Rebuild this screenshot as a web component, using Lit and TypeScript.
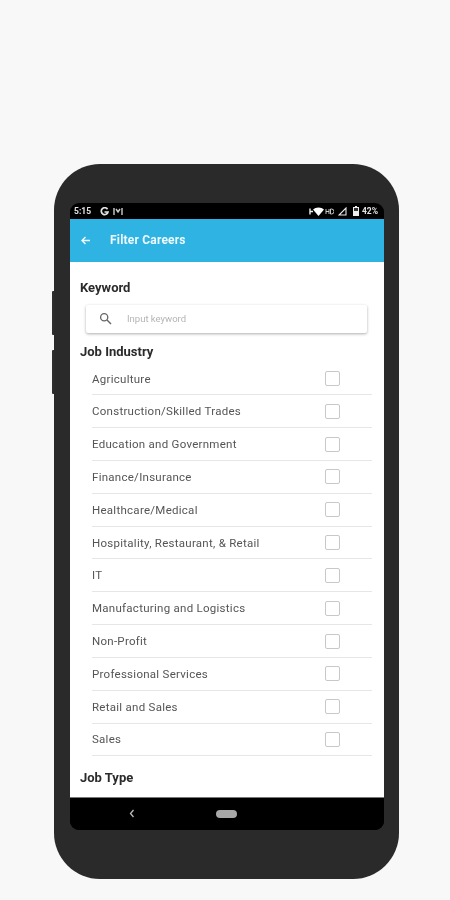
import { LitElement, html, css } from "lit";
import { customElement } from "lit/decorators.js";

const INDUSTRIES = [
  "Agriculture",
  "Construction/Skilled Trades",
  "Education and Government",
  "Finance/Insurance",
  "Healthcare/Medical",
  "Hospitality, Restaurant, & Retail",
  "IT",
  "Manufacturing and Logistics",
  "Non-Profit",
  "Professional Services",
  "Retail and Sales",
  "Sales",
];

@customElement("app-root")
export class AppRoot extends LitElement {
  static styles = css`
    :host {
      display: block;
      width: 450px;
      height: 900px;
      overflow: hidden;
      background: #f8f8f8;
      font-family: Roboto, "Liberation Sans", sans-serif;
    }
    .page {
      padding: 164px 0 0 54px;
    }
    .phone {
      position: relative;
      box-sizing: border-box;
      width: 345px;
      height: 715px;
      padding: 39px 15px 0 16px;
      background: #2a2a2a;
      border-radius: 46px;
      filter: blur(0.6px);
    }
    .side {
      position: absolute;
      left: -2px;
      width: 2px;
      height: 44px;
      background: #2e2e2e;
      border-radius: 1px 0 0 1px;
    }
    .side.power { top: 127px; }
    .side.volume { top: 186px; }
    .screen {
      height: 627px;
      display: flex;
      flex-direction: column;
      overflow: hidden;
      background: #000;
      border-radius: 9px;
    }
    .status {
      flex: none;
      height: 16px;
      box-sizing: border-box;
      padding: 0 6px 0 4px;
      display: flex;
      align-items: center;
      color: #e4e4e4;
      font-size: 8.5px;
      font-weight: 700;
    }
    .status-left, .status-right {
      display: flex;
      align-items: center;
    }
    .status-left { gap: 9px; }
    .status-right { margin-left: auto; }
    .status svg { display: block; }
    .signal { margin-left: 4px; }
    .battery { margin-left: 6px; margin-right: 3px; }
    .appbar {
      flex: none;
      height: 43px;
      box-sizing: border-box;
      padding: 0 0 1px 10px;
      display: flex;
      align-items: center;
      gap: 19px;
      background: #2fb3e3;
      color: #eef9fd;
      font-size: 12px;
      font-weight: 700;
      letter-spacing: 0.2px;
    }
    .content {
      flex: 1;
      min-height: 0;
      box-sizing: border-box;
      padding: 17px 12px 0 10px;
      overflow: hidden;
      background: #fff;
    }
    h2 {
      margin: 0;
      font-size: 13px;
      line-height: 18px;
      font-weight: 700;
      color: #2b2b2b;
    }
    .search {
      margin: 8px 5px 10px 6px;
      height: 28px;
      box-sizing: border-box;
      padding: 0 0 2px 13px;
      display: flex;
      align-items: center;
      gap: 15px;
      background: #fff;
      border-radius: 2px;
      box-shadow: 0 1px 3px rgba(0, 0, 0, 0.32);
      font-size: 9.5px;
      color: #b4b4b4;
    }
    .list {
      margin: 1.6px 0 12.4px 12px;
    }
    .row {
      box-sizing: border-box;
      height: 32.82px;
      display: flex;
      align-items: center;
      justify-content: space-between;
      padding-right: 32px;
      border-bottom: 1px solid #e6e6e6;
      font-size: 11.5px;
      letter-spacing: 0.27px;
      color: #555;
    }
    .box {
      box-sizing: border-box;
      width: 15px;
      height: 15px;
      border: 1.5px solid #c8c8c8;
      border-radius: 2px;
      background: #fff;
    }
    .nav {
      flex: none;
      height: 33px;
      position: relative;
      display: flex;
      align-items: center;
      justify-content: center;
      padding-right: 2px;
      background: #000;
      border-top: 1px solid #777;
      box-sizing: border-box;
    }
    .pill {
      width: 21px;
      height: 8px;
      border-radius: 4px;
      background: #a8a8a8;
    }
    .back {
      position: absolute;
      left: 59px;
      top: 11px;
    }
  `;

  render() {
    return html`
      <div class="page">
        <div class="phone">
          <div class="side power"></div>
          <div class="side volume"></div>
          <div class="screen">
            <div class="status">
              <div class="status-left">
                <span>5:15</span>
                <svg width="23" height="9" viewBox="0 0 23 9">
                  <path d="M7.5 2.2A3.4 3.4 0 1 0 8 5H4.5" fill="none" stroke="#e4e4e4" stroke-width="1.7"></path>
                  <path d="M14 1v7M22 1v7M16 2l2 3 2-3" fill="none" stroke="#ccc" stroke-width="1.4"></path>
                </svg>
              </div>
              <div class="status-right">
                <svg width="25" height="9" viewBox="0 0 25 9">
                  <path d="M1 1.5v6M1 4.5h3" stroke="#eee" stroke-width="1.4"></path>
                  <path d="M4 2.5Q6 0.5 9.5 0.5T15 2.5L9.5 9z" fill="#fff"></path>
                  <path d="M17 2v5M20 2v5M17 4.5h3M21.5 2v5h1a2.5 2.5 0 0 0 0-5z" fill="none" stroke="#ddd" stroke-width="0.9"></path>
                </svg>
                <svg class="signal" width="9" height="9" viewBox="0 0 9 9">
                  <path d="M8 1v7H1z" fill="none" stroke="#e8e8e8" stroke-width="1.1"></path>
                </svg>
                <svg class="battery" width="6" height="10" viewBox="0 0 6 10">
                  <path d="M2 0h2v1h2v9H0V1h2z" fill="#eee"></path>
                  <path d="M1 2h4v3H1z" fill="#333"></path>
                </svg>
                <span>42%</span>
              </div>
            </div>
            <div class="appbar">
              <svg width="11" height="11" viewBox="0 0 11 11">
                <path d="M10 5.5H2M5.5 2L2 5.5 5.5 9" fill="none" stroke="#eef9fd" stroke-width="1.4"></path>
              </svg>
              <span>Filter Careers</span>
            </div>
            <div class="content">
              <h2>Keyword</h2>
              <div class="search">
                <svg width="13" height="13" viewBox="0 0 13 13">
                  <circle cx="5.2" cy="5.2" r="3.6" fill="none" stroke="#666" stroke-width="1.3"></circle>
                  <path d="M8 8l4 4" stroke="#666" stroke-width="1.5"></path>
                </svg>
                <span>Input keyword</span>
              </div>
              <h2>Job Industry</h2>
              <div class="list">
                ${INDUSTRIES.map(
                  (name) => html`<div class="row"><span>${name}</span><div class="box"></div></div>`
                )}
              </div>
              <h2>Job Type</h2>
            </div>
            <div class="nav">
              <svg class="back" width="6" height="9" viewBox="0 0 6 9">
                <path d="M4.5 1L1.5 4.5 4.5 8" fill="none" stroke="#bbb" stroke-width="1.3"></path>
              </svg>
              <div class="pill"></div>
            </div>
          </div>
        </div>
      </div>
    `;
  }
}
